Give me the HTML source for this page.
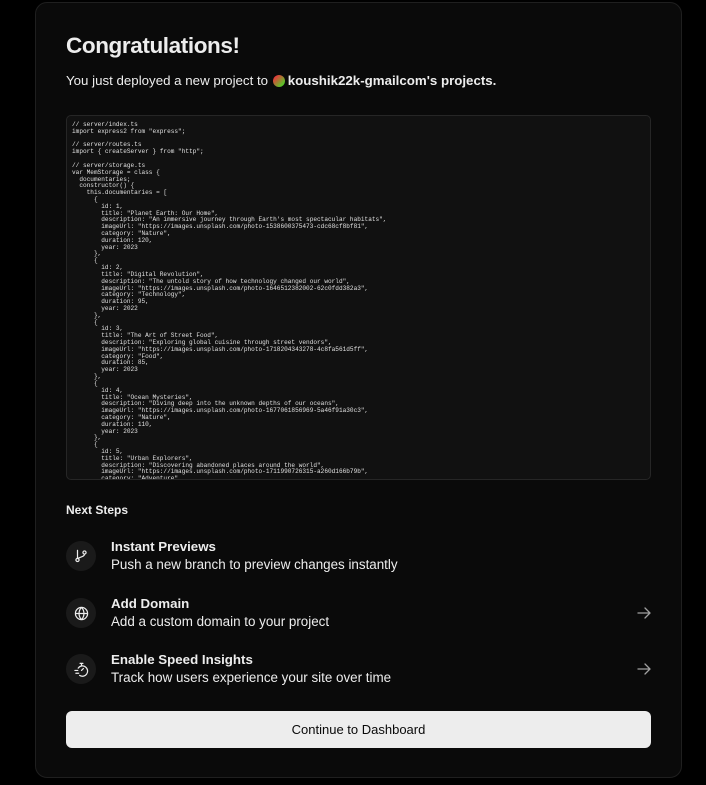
<!DOCTYPE html>
<html><head><meta charset="utf-8"><style>
*{box-sizing:border-box;margin:0;padding:0}
body{width:706px;height:785px;background:#000;font-family:"Liberation Sans",sans-serif;color:#ededed;position:relative;overflow:hidden}
.card{position:absolute;left:35px;top:2px;width:647px;height:776px;background:#0a0a0a;border:1px solid #1f1f1f;border-radius:12px}
h1{position:absolute;left:66px;top:33px;font-size:22.5px;font-weight:700;letter-spacing:-0.4px;color:#ededed}
.sub{position:absolute;left:66px;top:73px;font-size:13.3px;color:#ededed}
.dot{display:inline-block;width:12px;height:12px;border-radius:50%;background:linear-gradient(135deg,#e0403a 20%,#5ac52a 80%);vertical-align:-2px;margin:0 3px 0 1px}
.code{position:absolute;left:66px;top:115px;width:585px;height:365px;background:#111;border:1px solid #262626;border-radius:5px;overflow:hidden}
pre{position:absolute;left:5px;top:6px;font-family:"Liberation Mono",monospace;font-size:6.1px;line-height:6.82px;color:#e0e0e0}
.ns{position:absolute;left:66px;top:503px;font-size:12px;font-weight:700;color:#ededed}
.item{position:absolute;left:66px;width:585px}
.ic{position:absolute;left:0;width:30px;height:30px;border-radius:50%;background:#1a1a1a;display:flex;align-items:center;justify-content:center}
.t{position:absolute;left:45px;font-size:13.3px;font-weight:700;color:#ededed;white-space:nowrap}
.d{position:absolute;left:45px;font-size:13.4px;color:#ededed;white-space:nowrap}
.arr{position:absolute;right:0}
.btn{position:absolute;left:66px;top:711px;width:585px;height:37px;background:#ededed;border-radius:6px;color:#0a0a0a;font-size:13px;display:flex;align-items:center;justify-content:center}
</style></head><body>
<div class="card"></div>
<h1>Congratulations!</h1>
<div class="sub">You just deployed a new project to <span class="dot"></span><b>koushik22k-gmailcom's projects.</b></div>
<div class="code"><pre>// server/index.ts
import express2 from "express";

// server/routes.ts
import { createServer } from "http";

// server/storage.ts
var MemStorage = class {
  documentaries;
  constructor() {
    this.documentaries = [
      {
        id: 1,
        title: "Planet Earth: Our Home",
        description: "An immersive journey through Earth's most spectacular habitats",
        imageUrl: "https://images.unsplash.com/photo-1538600375473-cdc68cf8bf81",
        category: "Nature",
        duration: 120,
        year: 2023
      },
      {
        id: 2,
        title: "Digital Revolution",
        description: "The untold story of how technology changed our world",
        imageUrl: "https://images.unsplash.com/photo-1646512382002-62c0fdd382a3",
        category: "Technology",
        duration: 95,
        year: 2022
      },
      {
        id: 3,
        title: "The Art of Street Food",
        description: "Exploring global cuisine through street vendors",
        imageUrl: "https://images.unsplash.com/photo-1718204343278-4c8fa561d5ff",
        category: "Food",
        duration: 85,
        year: 2023
      },
      {
        id: 4,
        title: "Ocean Mysteries",
        description: "Diving deep into the unknown depths of our oceans",
        imageUrl: "https://images.unsplash.com/photo-1677061856969-5a46f91a30c3",
        category: "Nature",
        duration: 110,
        year: 2023
      },
      {
        id: 5,
        title: "Urban Explorers",
        description: "Discovering abandoned places around the world",
        imageUrl: "https://images.unsplash.com/photo-1711990726315-a260d166b79b",
        category: "Adventure",</pre></div>
<div class="ns">Next Steps</div>

<div class="item" style="top:541px">
<div class="ic" style="top:0"><svg width="14" height="14" viewBox="0 0 16 16" fill="none" stroke="#ededed" stroke-width="1.4" stroke-linecap="round"><circle cx="4" cy="12.5" r="1.8"/><circle cx="12" cy="4" r="1.8"/><path d="M4 1.5v9M12 5.8c0 3.5-6 3-7.3 5.2"/></svg></div>
<div class="t" style="top:-2px">Instant Previews</div>
<div class="d" style="top:16px">Push a new branch to preview changes instantly</div>
</div>

<div class="item" style="top:598px">
<div class="ic" style="top:0"><svg width="15" height="15" viewBox="0 0 16 16" fill="none" stroke="#ededed" stroke-width="1.3"><circle cx="8" cy="8" r="6.5"/><path d="M1.5 8h13M8 1.5c-3.5 3.5-3.5 9.5 0 13M8 1.5c3.5 3.5 3.5 9.5 0 13"/></svg></div>
<div class="t" style="top:-2px">Add Domain</div>
<div class="d" style="top:16px">Add a custom domain to your project</div>
<svg class="arr" style="top:9px" width="14" height="12" viewBox="0 0 14 12" fill="none" stroke="#a0a0a0" stroke-width="1.3" stroke-linecap="round"><path d="M1 6h12M8 1l5 5-5 5"/></svg>
</div>

<div class="item" style="top:654px">
<div class="ic" style="top:0"><svg width="15" height="15" viewBox="0 0 16 16" fill="none" stroke="#ededed" stroke-width="1.3" stroke-linecap="round"><path d="M6.5 1.5h3M8 1.5v2M4.5 6.5A5.5 5.5 0 1 1 6 14.3"/><path d="M8 9l2-2M1 9h3M2 12h3"/></svg></div>
<div class="t" style="top:-2px">Enable Speed Insights</div>
<div class="d" style="top:16px">Track how users experience your site over time</div>
<svg class="arr" style="top:9px" width="14" height="12" viewBox="0 0 14 12" fill="none" stroke="#a0a0a0" stroke-width="1.3" stroke-linecap="round"><path d="M1 6h12M8 1l5 5-5 5"/></svg>
</div>

<div class="btn">Continue to Dashboard</div>
</body></html>
